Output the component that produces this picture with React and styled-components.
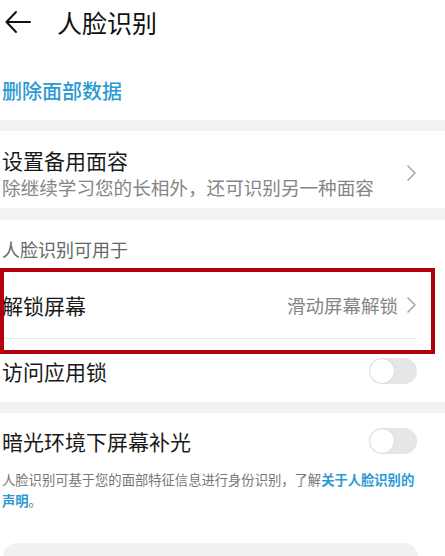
import styled, { createGlobalStyle } from 'styled-components'

const GlobalStyle = createGlobalStyle`
  html, body {
    margin: 0;
    padding: 0;
    background: #ffffff;
  }
  body {
    font-family: "Noto Sans CJK SC", "Noto Sans", sans-serif;
    color: #1a1a1a;
  }
`

const Page = styled.div`
  width: 445px;
  height: 556px;
  overflow: hidden;
  background: #fff;
`

const Header = styled.div`
  height: 44px;
  display: flex;
  align-items: center;
  gap: 26px;
  padding-left: 5px;
`

const Title = styled.h1`
  margin: 0;
  font-size: 25px;
  font-weight: 400;
  line-height: 30px;
  color: #111;
`

const LinkBlock = styled.div`
  height: 76px;
  box-sizing: border-box;
  padding: 33px 2px 0;
  line-height: 28px;
`

const BlueLink = styled.span`
  font-size: 20px;
  line-height: 28px;
  font-weight: 500;
  color: #2b9ad4;
`

const Band = styled.div`
  height: ${props => props.h}px;
  background: #f2f2f2;
`

const Item = styled.div`
  position: relative;
  display: flex;
  align-items: center;
  justify-content: space-between;
  height: ${props => props.h}px;
  box-sizing: border-box;
  margin: 0 28px 0 2px;
  border-bottom: ${props => (props.divider ? '1px solid #e9e9e9' : 'none')};
`

const TwoLine = styled.div`
  display: flex;
  flex-direction: column;
`

const ItemTitle = styled.div`
  font-size: 21px;
  line-height: 28px;
  color: #1a1a1a;
`

const ItemSub = styled.div`
  font-size: 18.6px;
  line-height: 26px;
  color: #858585;
`

const BackupItem = styled.div`
  display: flex;
  align-items: center;
  justify-content: space-between;
  height: 77px;
  padding: 7px 28px 0 2px;
  box-sizing: border-box;
`

const SectionHeader = styled.div`
  height: 52px;
  box-sizing: border-box;
  padding: 17px 2px 0;
  font-size: 18px;
  line-height: 24px;
  color: #666;
`

const Right = styled.div`
  display: flex;
  align-items: center;
  gap: 8px;
`

const Value = styled.span`
  font-size: 18.5px;
  line-height: 26px;
  color: #858585;
`

const Annotation = styled.div`
  position: absolute;
  top: -4px;
  bottom: -16px;
  left: -2px;
  right: -18px;
  border: 4px solid #b3000c;
  pointer-events: none;
`

const Track = styled.div`
  width: 48px;
  height: 26px;
  border-radius: 13px;
  background: #e6e6e6;
  display: flex;
  align-items: center;
  padding: 1px;
  box-sizing: border-box;
`

const Knob = styled.div`
  width: 24px;
  height: 24px;
  border-radius: 50%;
  background: #fff;
  box-shadow: 0 0 1px rgba(0, 0, 0, 0.25);
`

const Note = styled.div`
  display: flex;
  flex-direction: column;
  padding: 0 28px 0 2px;
  font-size: 13.3px;
  line-height: 21px;
  color: #777;
`

const NoteLine = styled.div`
  white-space: nowrap;
`

const NoteLink = styled.span`
  color: #2b9ad4;
  font-weight: 700;
`

const BottomButton = styled.div`
  margin: 32px 27px 0 3px;
  height: 44px;
  border-radius: 14px;
  background: #f1f1f1;
`

function BackArrow() {
  return (
    <svg width="26" height="24" viewBox="0 0 26 24" fill="none" stroke="#111" strokeWidth="2" strokeLinecap="round" strokeLinejoin="round">
      <path d="M25 12H2" />
      <path d="M11 2L1.5 12L11 22" />
    </svg>
  )
}

function Chevron() {
  return (
    <svg width="11" height="18" viewBox="0 0 11 18" fill="none" stroke="#a8a8a8" strokeWidth="1.6" strokeLinecap="round" strokeLinejoin="round">
      <path d="M2 2L9 9L2 16" />
    </svg>
  )
}

function Toggle() {
  return (
    <Track>
      <Knob />
    </Track>
  )
}

export default function App() {
  return (
    <>
      <GlobalStyle />
      <Page>
        <Header>
          <BackArrow />
          <Title>人脸识别</Title>
        </Header>

        <LinkBlock>
          <BlueLink>删除面部数据</BlueLink>
        </LinkBlock>

        <Band h={11} />

        <BackupItem>
          <TwoLine>
            <ItemTitle>设置备用面容</ItemTitle>
            <ItemSub>除继续学习您的长相外，还可识别另一种面容</ItemSub>
          </TwoLine>
          <Chevron />
        </BackupItem>

        <Band h={12} />

        <SectionHeader>人脸识别可用于</SectionHeader>

        <Item h={67} divider>
          <ItemTitle>解锁屏幕</ItemTitle>
          <Right>
            <Value>滑动屏幕解锁</Value>
            <Chevron />
          </Right>
          <Annotation />
        </Item>

        <Item h={63}>
          <ItemTitle>访问应用锁</ItemTitle>
          <Toggle />
        </Item>

        <Band h={11} />

        <Item h={56}>
          <ItemTitle>暗光环境下屏幕补光</ItemTitle>
          <Toggle />
        </Item>

        <Note>
          <NoteLine>
            人脸识别可基于您的面部特征信息进行身份识别，了解<NoteLink>关于人脸识别的</NoteLink>
          </NoteLine>
          <NoteLine>
            <NoteLink>声明</NoteLink>。
          </NoteLine>
        </Note>

        <BottomButton />
      </Page>
    </>
  )
}
